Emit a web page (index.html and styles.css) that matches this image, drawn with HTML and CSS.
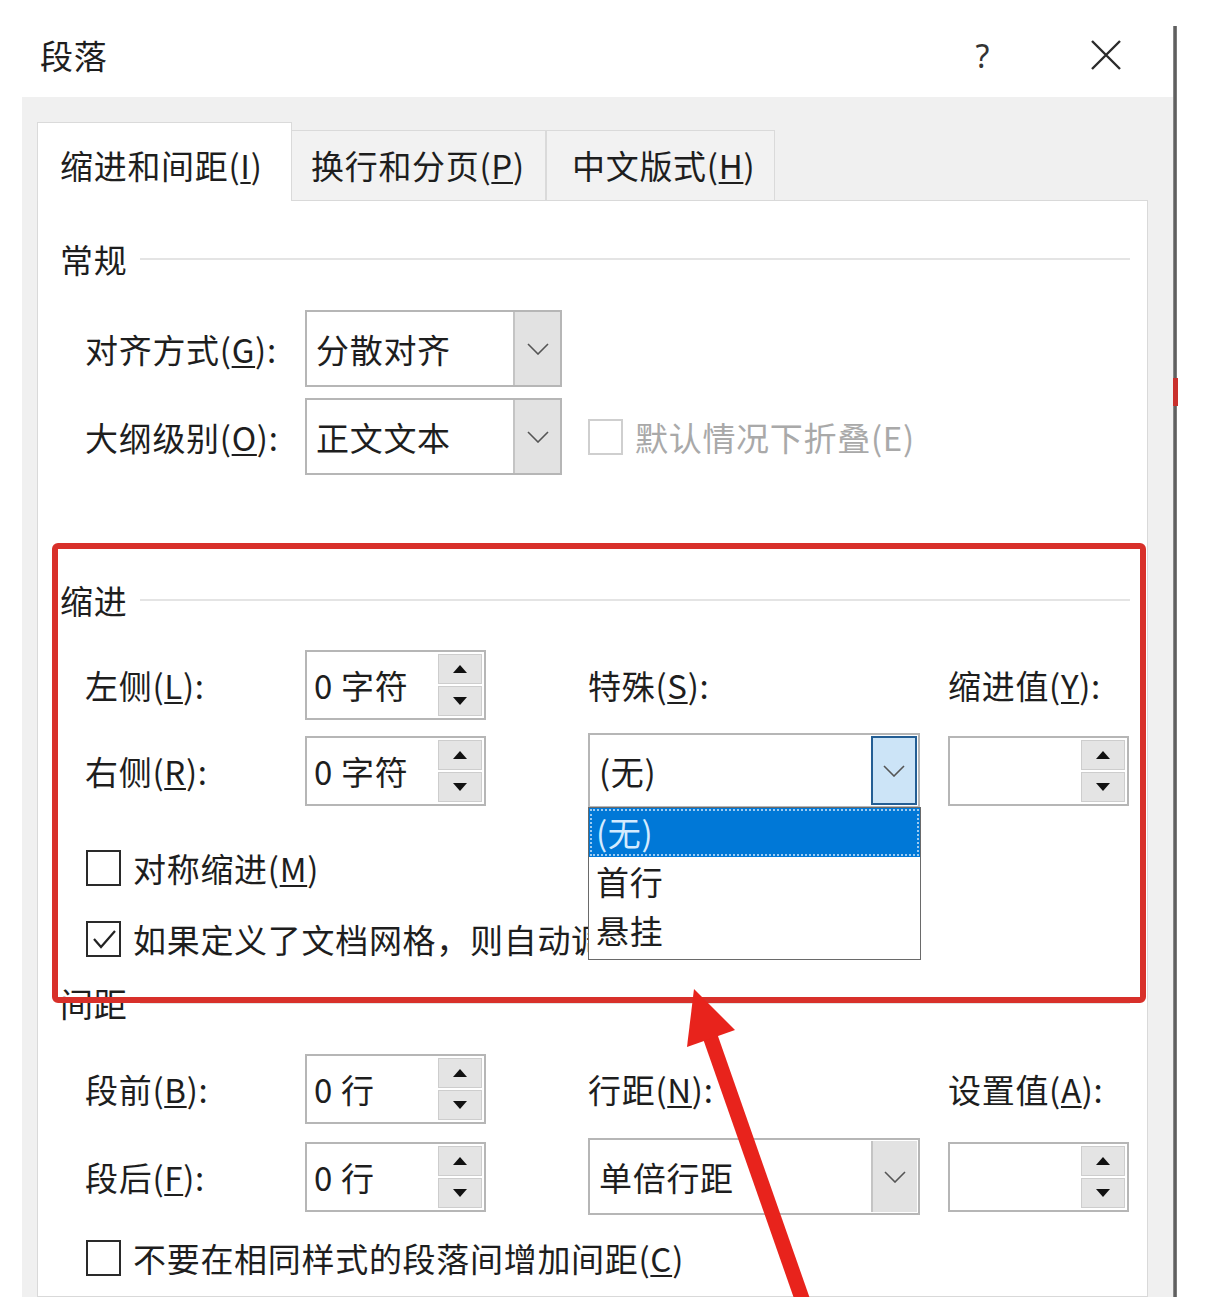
FILE: index.html
```html
<!DOCTYPE html>
<html lang="zh-CN">
<head>
<meta charset="utf-8">
<title>段落</title>
<link rel="stylesheet" href="styles.css">
</head>
<body>
<div class="screen">
  <div class="dialog">
    <div class="titlebar">
      <span class="title">段落</span>
      <span class="help">?</span>
      <span class="close"><svg width="32" height="32" viewBox="0 0 32 32"><path d="M2 2 L30 30 M30 2 L2 30" stroke="#2b2b2b" stroke-width="2.4" fill="none"/></svg></span>
    </div>
    <div class="body">
      <div class="tabs">
        <div class="tab active">缩进和间距(<u>I</u>)</div>
        <div class="tab t2">换行和分页(<u>P</u>)</div>
        <div class="tab t3">中文版式(<u>H</u>)</div>
      </div>
      <div class="panel">
        <div class="ghead g1"><span>常规</span><i></i></div>
        <div class="frow r1">
          <span class="lbl">对齐方式(<u>G</u>):</span>
          <div class="combo"><span class="cv">分散对齐</span><b class="btn"><svg width="22" height="12" viewBox="0 0 22 12"><polyline points="1,1 11,11 21,1" fill="none" stroke="#555" stroke-width="1.6"/></svg></b></div>
        </div>
        <div class="frow r2">
          <span class="lbl">大纲级别(<u>O</u>):</span>
          <div class="combo"><span class="cv">正文文本</span><b class="btn"><svg width="22" height="12" viewBox="0 0 22 12"><polyline points="1,1 11,11 21,1" fill="none" stroke="#555" stroke-width="1.6"/></svg></b></div>
          <span class="check disabled"><b class="box"></b>默认情况下折叠(E)</span>
        </div>

        <div class="ghead g2"><span>缩进</span><i></i></div>
        <div class="grid gi">
          <span class="lbl">左侧(<u>L</u>):</span>
          <div class="spin"><span class="sv">0 字符</span><span class="arrows"><b class="up"></b><b class="dn"></b></span></div>
          <span class="lbl">特殊(<u>S</u>):</span>
          <span class="lbl">缩进值(<u>Y</u>):</span>

          <span class="lbl">右侧(<u>R</u>):</span>
          <div class="spin"><span class="sv">0 字符</span><span class="arrows"><b class="up"></b><b class="dn"></b></span></div>
          <div class="combo wide focus"><span class="cv">(无)</span><b class="btn"><svg width="22" height="12" viewBox="0 0 22 12"><polyline points="1,1 11,11 21,1" fill="none" stroke="#555" stroke-width="1.6"/></svg></b>
            <ul class="list">
              <li class="sel">(无)</li>
              <li>首行</li>
              <li>悬挂</li>
            </ul>
          </div>
          <div class="spin"><span class="sv"></span><span class="arrows"><b class="up"></b><b class="dn"></b></span></div>
        </div>
        <div class="crow c1"><span class="check"><b class="box"></b>对称缩进(<u>M</u>)</span></div>
        <div class="crow c2"><span class="check"><b class="box"><svg width="30" height="30" viewBox="0 0 30 30"><polyline points="5,15 12,23 26,7" fill="none" stroke="#222" stroke-width="2.2"/></svg></b>如果定义了文档网格，则自动调整右缩进(<u>D</u>)</span></div>

        <div class="ghead g3"><span>间距</span><i></i></div>
        <div class="grid gs">
          <span class="lbl">段前(<u>B</u>):</span>
          <div class="spin"><span class="sv">0 行</span><span class="arrows"><b class="up"></b><b class="dn"></b></span></div>
          <span class="lbl">行距(<u>N</u>):</span>
          <span class="lbl">设置值(<u>A</u>):</span>

          <span class="lbl">段后(<u>F</u>):</span>
          <div class="spin"><span class="sv">0 行</span><span class="arrows"><b class="up"></b><b class="dn"></b></span></div>
          <div class="combo wide"><span class="cv">单倍行距</span><b class="btn"><svg width="22" height="12" viewBox="0 0 22 12"><polyline points="1,1 11,11 21,1" fill="none" stroke="#555" stroke-width="1.6"/></svg></b></div>
          <div class="spin"><span class="sv"></span><span class="arrows"><b class="up"></b><b class="dn"></b></span></div>
        </div>
        <div class="crow c3"><span class="check"><b class="box"></b>不要在相同样式的段落间增加间距(<u>C</u>)</span></div>
      </div>
    </div>
  </div>
  <div class="edge"><i class="mark"></i></div>
</div>
<div class="redbox"></div>
<svg class="arrow" width="1230" height="1297" viewBox="0 0 1230 1297">
  <line x1="710" y1="1036" x2="806" y2="1310" stroke="#e8231c" stroke-width="15"/>
  <polygon points="694,989 735,1030 687,1047" fill="#e8231c"/>
</svg>
</body>
</html>
```
FILE: styles.css
```css
* { box-sizing: border-box; margin: 0; padding: 0; }
html, body { width: 1230px; height: 1297px; overflow: hidden; background: #fff; }
body {
  position: relative;
  font-family: "Noto Sans CJK SC", "Noto Sans", sans-serif;
  font-size: 33px;
  letter-spacing: 0.7px;
  color: #1e1e1e;
}
u { text-decoration-thickness: 2px; text-underline-offset: 3px; }

.screen { display: flex; height: 1297px; }
.dialog { width: 1151px; margin-left: 22px; display: flex; flex-direction: column; }

.titlebar {
  height: 97px;
  display: flex;
  align-items: center;
  padding: 13px 51px 0 18px;
  background: #fff;
}
.title { flex: 1; line-height: 44px; }
.help { font-family: "Noto Sans", sans-serif; font-size: 32px; color: #333; margin-right: 100px; }
.close svg { display: block; }

.body {
  flex: 1;
  background: #f0f0f0;
  padding: 25px 25px 0 15px;
  display: flex;
  flex-direction: column;
}
.tabs { display: flex; align-items: flex-end; height: 78px; }
.tab {
  height: 70px;
  padding: 12px 0 0 19px;
  border: 1px solid #dadada;
  border-bottom: none;
  background: #f2f2f2;
  line-height: 44px;
  white-space: nowrap;
}
.tab.active {
  width: 255px;
  height: 79px;
  padding: 20px 0 0 22px;
  background: #fff;
  position: relative;
  z-index: 1;
  margin-bottom: -1px;
}
.tab.t2 { width: 254px; border-left: none; }
.tab.t3 { width: 229px; border-left: 1px solid #dadada; padding-left: 25px; }

.panel {
  flex: 1;
  background: #fff;
  border: 1px solid #d9d9d9;
  padding: 0 17px 0 22px;
  display: flex;
  flex-direction: column;
}

.ghead { display: flex; align-items: center; height: 40px; }
.ghead i { flex: 1; height: 2px; background: #e4e4e4; margin-left: 13px; }
.g1 { margin-top: 38px; }
.g2 { margin-top: 105px; }
.g3 { margin-top: 26px; }

.lbl { white-space: nowrap; }

.frow { display: flex; align-items: center; height: 77px; padding-left: 25px; }
.frow .lbl { width: 220px; }
.r1 { margin-top: 31px; }
.r2 { margin-top: 11px; }

.combo {
  position: relative;
  width: 257px;
  height: 77px;
  border: 2px solid #b6b6b6;
  background: #fff;
  display: flex;
  align-items: center;
}
.combo .cv { padding-left: 9px; white-space: nowrap; }
.combo .btn {
  margin-left: auto;
  width: 47px;
  height: 100%;
  background: #e2e2e2;
  border-left: 2px solid #c4c4c4;
  display: flex;
  align-items: center;
  justify-content: center;
}
.combo.wide { width: 332px; height: 75px; }
.gs .combo.wide { height: 77px; }
.combo.wide .btn { width: 46px; height: calc(100% - 2px); margin-right: 1px; }
.combo.focus .btn { background: #cce4f7; border: 2px solid #245e94; }

.list {
  position: absolute;
  left: -2px;
  top: calc(100% + 1px);
  width: 333px;
  list-style: none;
  background: #fff;
  border: 1px solid #6a6a6a;
  padding-bottom: 4px;
  z-index: 5;
}
.list li { height: 49px; line-height: 49px; padding-left: 7px; }
.list li.sel {
  background: #0078d7;
  color: #d4ebff;
  outline: 2px dotted #9ccbf2;
  outline-offset: -3px;
}

.check { display: flex; align-items: center; white-space: nowrap; }
.check .box {
  width: 35px;
  height: 36px;
  border: 2px solid #2a2a2a;
  background: #fff;
  margin-right: 12px;
  display: flex;
  align-items: center;
  justify-content: center;
}
.frow .check { margin-left: 26px; }
.check.disabled { color: #a9a9a9; }
.check.disabled .box { border-color: #cfcfcf; }

.grid {
  display: grid;
  grid-template-columns: 220px 283px 360px 181px;
  align-items: center;
  padding-left: 25px;
}
.gi { margin-top: 30px; grid-template-rows: 70px 75px; row-gap: 13px; }
.gs { margin-top: 31px; grid-template-rows: 70px 77px; row-gap: 14px; }

.spin {
  width: 181px;
  height: 70px;
  border: 2px solid #b6b6b6;
  background: #fff;
  display: flex;
  align-items: center;
  padding-left: 7px;
}
.spin .sv { white-space: nowrap; }
.spin .arrows {
  margin-left: auto;
  margin-right: 2px;
  width: 44px;
  height: 62px;
  display: flex;
  flex-direction: column;
  gap: 2px;
}
.spin .arrows b {
  flex: 1;
  background: #e4e4e4;
  border: 1px solid #cdcdcd;
  display: flex;
  align-items: center;
  justify-content: center;
}
.spin .arrows b::after { content: ""; width: 0; height: 0; border-left: 7px solid transparent; border-right: 7px solid transparent; }
.spin .arrows .up::after { border-bottom: 8px solid #111; }
.spin .arrows .dn::after { border-top: 8px solid #111; }

.crow { display: flex; align-items: center; height: 36px; padding-left: 26px; }
.c1 { margin-top: 42px; }
.c2 { margin-top: 35px; }
.c3 { margin-top: 25px; }

.edge {
  width: 4px;
  margin-top: 26px;
  background: linear-gradient(to right, #9a9a9a, #4f4f4f, #8a8a8a);
  position: relative;
}
.edge .mark {
  position: absolute;
  left: 0;
  top: 352px;
  width: 5px;
  height: 28px;
  background: #c9302c;
}

.redbox {
  position: absolute;
  left: 52px;
  top: 543px;
  width: 1094px;
  height: 460px;
  border: 6px solid #d8302a;
  border-radius: 6px;
  z-index: 10;
  pointer-events: none;
}
.arrow { position: absolute; left: 0; top: 0; z-index: 11; pointer-events: none; }
```
